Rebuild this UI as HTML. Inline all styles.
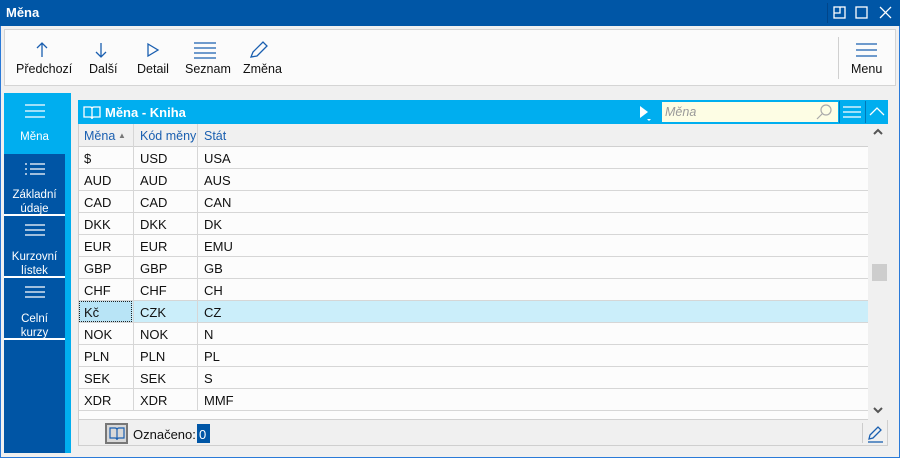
<!DOCTYPE html>
<html><head><meta charset="utf-8"><style>
*{box-sizing:border-box;margin:0;padding:0}
body{width:900px;height:458px;overflow:hidden;font-family:"Liberation Sans",sans-serif;font-size:12px;background:#fff;position:relative;color:#111}
.a{position:absolute}
.win{left:0;top:0;width:900px;height:458px;border:1px solid #2a7ad8;background:#f0f0f0}
.title{left:0;top:0;width:900px;height:26px;background:#0056a6;color:#fff;font-weight:bold;font-size:13px;padding:5px 6px}
.tb{left:4px;top:29px;width:892px;height:57px;background:#fbfbfb;border:1px solid #d4d4d4}
.btn{position:absolute;top:33px;font-size:12.5px;color:#111;text-align:center}
.side{left:4px;top:93px;width:61px;height:360px;background:#0055a5}
.si{position:absolute;left:0;width:61px;color:#fff;font-size:11.5px;text-align:center;border-bottom:2px solid #fff}
.cy{left:65px;top:93px;width:6px;height:360px;background:#00aeef}
.grid{left:78px;top:100px;width:810px;height:346px;border:1px solid #cfcfcf;background:#f0f0f0}
.gh{left:78px;top:100px;width:810px;height:24px;background:#00aeef;color:#fff;font-weight:bold;font-size:13px}
.row{position:absolute;left:79px;width:789px;height:22px;background:#fcfcfc;border-bottom:1px solid #d6d6d6;font-size:13px}
.row span{position:absolute;top:4px}
.row i{position:absolute;top:0;width:1px;height:22px;background:#d6d6d6}
</style></head><body>
<div class="a win"></div>
<div class="a title">Měna
<svg class="a" style="left:832px;top:6px" width="62" height="14" stroke="#fff" fill="none" stroke-width="1.3"><rect x="2" y="1" width="11" height="11"/><path d="M2 7H8V1"/><rect x="24" y="1" width="11" height="11"/><path d="M48 1L59 12M59 1L48 12"/></svg>
<div class="a" style="left:827px;top:3px;width:1px;height:20px;background:#00458a"></div>
</div>
<div class="a tb"></div>
<svg class="a" style="left:30px;top:40px" width="240" height="20" stroke="#1a5fb0" fill="none" stroke-width="1.3">
<path d="M12 3V17M7 8L12 3L17 8"/><path d="M71 3V17M66 12L71 17L76 12"/>
<path d="M118 4L128 10L118 16Z"/>
<path d="M164 3H186M164 8H186M164 13H186M164 18H186"/>
<path d="M221 17L223 12L233 2L237 6L227 16Z"/></svg>
<div class="btn" style="left:16px;top:62px">Předchozí</div>
<div class="btn" style="left:89px;top:62px">Další</div>
<div class="btn" style="left:137px;top:62px">Detail</div>
<div class="btn" style="left:185px;top:62px">Seznam</div>
<div class="btn" style="left:243px;top:62px">Změna</div>
<div class="a" style="left:838px;top:37px;width:1px;height:42px;background:#d0d0d0"></div>
<svg class="a" style="left:855px;top:42px" width="24" height="16" stroke="#1a5fb0" stroke-width="1.3"><path d="M1 2H22M1 8H22M1 14H22"/></svg>
<div class="btn" style="left:851px;top:62px">Menu</div>

<div class="a side">
<div class="si" style="top:0;height:61px;background:#00aeef;border:none"><svg style="margin-top:10px" width="22" height="16" stroke="#fff" stroke-width="1.2"><path d="M1 2H21M1 8H21M1 14H21"/></svg><div style="margin-top:9px">Měna</div></div>
<div class="si" style="top:61px;height:62px"><svg style="margin-top:8px" width="22" height="14" stroke="#fff" stroke-width="1.2"><path d="M1 2H3M6 2H21M1 7H3M6 7H21M1 12H3M6 12H21"/></svg><div style="margin-top:9px;line-height:14px">Základní<br>údaje</div></div>
<div class="si" style="top:123px;height:62px"><svg style="margin-top:7px" width="22" height="14" stroke="#fff" stroke-width="1.2"><path d="M1 2H21M1 7H21M1 12H21"/></svg><div style="margin-top:10px;line-height:14px">Kurzovní<br>lístek</div></div>
<div class="si" style="top:185px;height:62px"><svg style="margin-top:7px" width="22" height="14" stroke="#fff" stroke-width="1.2"><path d="M1 2H21M1 7H21M1 12H21"/></svg><div style="margin-top:10px;line-height:14px">Celní<br>kurzy</div></div>
</div>
<div class="a cy"></div>

<div class="a grid"></div>
<div class="a gh">
<svg class="a" style="left:5px;top:5px" width="18" height="16" stroke="#fff" fill="none" stroke-width="1.3"><path d="M1 2H7Q9 2 9 4V14Q9 12 7 12H1ZM17 2H11Q9 2 9 4V14Q9 12 11 12H17Z"/></svg>
<span class="a" style="left:27px;top:5px">Měna - Kniha</span>
<svg class="a" style="left:560px;top:5px" width="14" height="16"><path d="M2 1L10 7L2 13Z" fill="#fff"/><path d="M9 14H13L11 16Z" fill="#fff"/></svg>
<div class="a" style="left:584px;top:2px;width:176px;height:20px;background:#fdfde4;color:#999;font-style:italic;font-weight:normal;font-size:12.5px;padding:3px 3px">Měna</div>
<svg class="a" style="left:738px;top:4px" width="16" height="16" stroke="#aaa" fill="none" stroke-width="1.2"><circle cx="10" cy="6" r="5"/><path d="M6 10L1 15"/></svg>
<div class="a" style="left:761px;top:1px;width:1px;height:22px;background:#0077b8"></div>
<svg class="a" style="left:764px;top:6px" width="20" height="14" stroke="#fff" stroke-width="1.3"><path d="M1 1H19M1 6H19M1 11H19"/></svg>
<div class="a" style="left:787px;top:1px;width:1px;height:22px;background:#0077b8"></div>
<svg class="a" style="left:791px;top:7px" width="16" height="10" stroke="#fff" fill="none" stroke-width="1.3"><path d="M1 8L8 1L15 8"/></svg>
</div>
<div class="a" style="left:79px;top:124px;width:789px;height:23px;background:#f0f0f0;border-bottom:1px solid #d0d0d0;color:#1a5fb0;font-size:12.5px">
<span class="a" style="left:5px;top:5px">Měna</span><span class="a" style="left:39px;top:7px;font-size:8px;color:#777">▲</span>
<span class="a" style="left:61px;top:5px">Kód měny</span><span class="a" style="left:125px;top:5px">Stát</span>
<i class="a" style="left:54px;top:0;width:1px;height:23px;background:#d6d6d6"></i><i class="a" style="left:118px;top:0;width:1px;height:23px;background:#d6d6d6"></i>
</div>
<div class="row" style="top:147px"><span style="left:5px">$</span><span style="left:61px">USD</span><span style="left:125px">USA</span><i style="left:54px"></i><i style="left:118px"></i></div>
<div class="row" style="top:169px"><span style="left:5px">AUD</span><span style="left:61px">AUD</span><span style="left:125px">AUS</span><i style="left:54px"></i><i style="left:118px"></i></div>
<div class="row" style="top:191px"><span style="left:5px">CAD</span><span style="left:61px">CAD</span><span style="left:125px">CAN</span><i style="left:54px"></i><i style="left:118px"></i></div>
<div class="row" style="top:213px"><span style="left:5px">DKK</span><span style="left:61px">DKK</span><span style="left:125px">DK</span><i style="left:54px"></i><i style="left:118px"></i></div>
<div class="row" style="top:235px"><span style="left:5px">EUR</span><span style="left:61px">EUR</span><span style="left:125px">EMU</span><i style="left:54px"></i><i style="left:118px"></i></div>
<div class="row" style="top:257px"><span style="left:5px">GBP</span><span style="left:61px">GBP</span><span style="left:125px">GB</span><i style="left:54px"></i><i style="left:118px"></i></div>
<div class="row" style="top:279px"><span style="left:5px">CHF</span><span style="left:61px">CHF</span><span style="left:125px">CH</span><i style="left:54px"></i><i style="left:118px"></i></div>
<div class="row" style="top:301px;background:#cbeefa"><div class="a" style="left:0;top:0;width:53px;height:21px;border:1px dotted #222;background:#b8e4f6"></div><span style="left:5px">Kč</span><span style="left:61px">CZK</span><span style="left:125px">CZ</span><i style="left:54px"></i><i style="left:118px"></i></div>
<div class="row" style="top:323px"><span style="left:5px">NOK</span><span style="left:61px">NOK</span><span style="left:125px">N</span><i style="left:54px"></i><i style="left:118px"></i></div>
<div class="row" style="top:345px"><span style="left:5px">PLN</span><span style="left:61px">PLN</span><span style="left:125px">PL</span><i style="left:54px"></i><i style="left:118px"></i></div>
<div class="row" style="top:367px"><span style="left:5px">SEK</span><span style="left:61px">SEK</span><span style="left:125px">S</span><i style="left:54px"></i><i style="left:118px"></i></div>
<div class="row" style="top:389px"><span style="left:5px">XDR</span><span style="left:61px">XDR</span><span style="left:125px">MMF</span><i style="left:54px"></i><i style="left:118px"></i></div>
<div class="a" style="left:79px;top:411px;width:789px;height:9px;background:#fcfcfc;border-bottom:1px solid #d0d0d0"></div>
<div class="a" style="left:868px;top:124px;width:20px;height:296px;background:#f0f0f0"></div>
<div class="a" style="left:872px;top:264px;width:15px;height:17px;background:#cdcdcd"></div>
<svg class="a" style="left:873px;top:128px" width="10" height="8" stroke="#555" fill="none" stroke-width="2"><path d="M1 6L5 2L9 6"/></svg>
<svg class="a" style="left:873px;top:406px" width="10" height="8" stroke="#555" fill="none" stroke-width="2"><path d="M1 2L5 6L9 2"/></svg>
<div class="a" style="left:105px;top:423px;width:23px;height:21px;border:2px solid #777;background:#d8d8d8"></div>
<svg class="a" style="left:109px;top:427px" width="16" height="14" stroke="#1a5fb0" fill="none" stroke-width="1.2"><path d="M1 1H6Q8 1 8 3V13Q8 11 6 11H1ZM15 1H10Q8 1 8 3V13Q8 11 10 11H15Z"/></svg>
<span class="a" style="left:133px;top:427px;font-size:13px">Označeno:</span>
<div class="a" style="left:197px;top:424px;width:13px;height:19px;background:#0056a6;color:#fff;font-size:13px;padding:3px 2px">0</div>
<div class="a" style="left:862px;top:423px;width:1px;height:20px;background:#ccc"></div>
<svg class="a" style="left:867px;top:425px" width="18" height="18" stroke="#1a5fb0" fill="none" stroke-width="1.3"><path d="M2 14L3 10L11 2L14 5L6 13Z"/><path d="M1 17H16"/></svg>
</body></html>
